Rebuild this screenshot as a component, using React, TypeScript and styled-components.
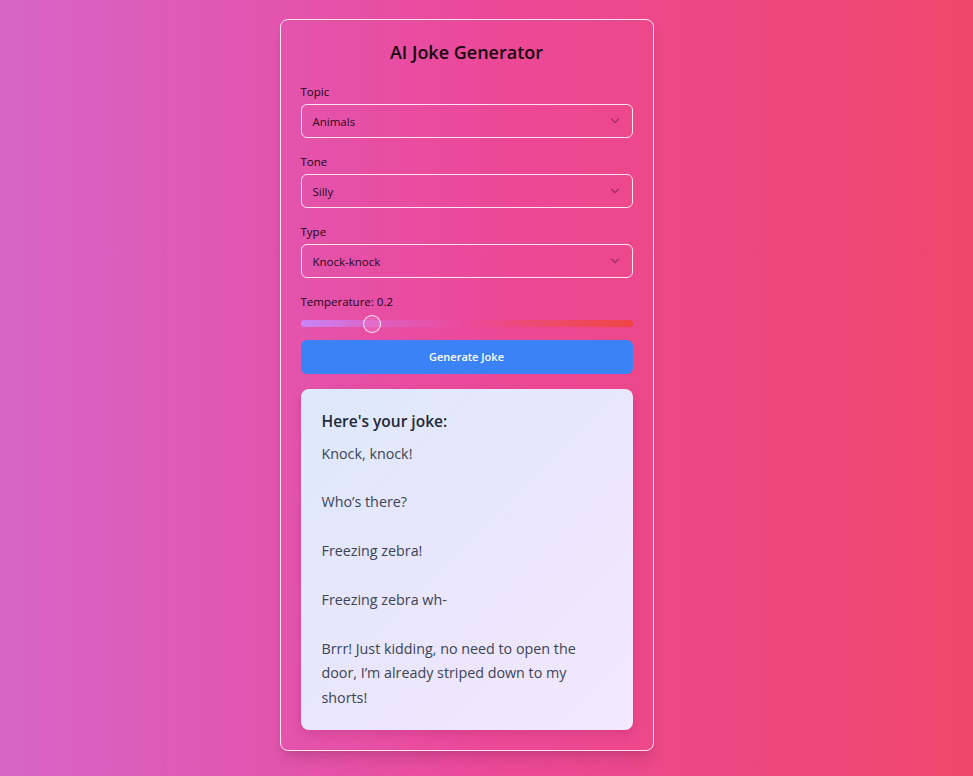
import * as React from "react";
import styled, { createGlobalStyle } from "styled-components";

const GlobalStyle = createGlobalStyle`
  html, body {
    margin: 0;
    padding: 0;
  }
  body {
    font-family: "Open Sans", "Noto Sans", sans-serif;
    background: linear-gradient(to right, #d665c8 0%, #ec4899 50%, #ef476b 100%);
    min-height: 776px;
  }
  * {
    box-sizing: border-box;
  }
`;

const Page = styled.div`
  display: flex;
  justify-content: center;
  padding: 19px 40px 0 0;
  min-height: 776px;
`;

const Card = styled.div`
  width: 374px;
  height: 732px;
  padding: 20px;
  border: 1px solid rgba(255, 255, 255, 0.85);
  border-radius: 8px;
  box-shadow: 0 10px 15px -3px rgba(0, 0, 0, 0.12), 0 4px 6px -4px rgba(0, 0, 0, 0.1);
  display: flex;
  flex-direction: column;
`;

const Title = styled.h1`
  margin: 0 0 20px;
  font-size: 18px;
  line-height: 24px;
  font-weight: 600;
  text-align: center;
  color: #14070f;
`;

const Field = styled.div`
  display: flex;
  flex-direction: column;
  margin-bottom: 16px;
`;

const Label = styled.label`
  font-size: 11.5px;
  line-height: 16px;
  font-weight: 500;
  color: #1c0612;
  margin-bottom: 4px;
`;

const SelectBox = styled.div`
  height: 34px;
  border: 1px solid rgba(255, 255, 255, 0.85);
  border-radius: 6px;
  display: flex;
  align-items: center;
  justify-content: space-between;
  padding: 0 12px 0 11px;
  font-size: 11.5px;
  color: #2a0b22;
`;

const Chevron = () => (
  <svg width="10" height="6" viewBox="0 0 10 6" fill="none">
    <path d="M1.5 1.2 L5 4.6 L8.5 1.2" stroke="#8a2a5c" strokeWidth="1.1" strokeLinecap="round" strokeLinejoin="round" />
  </svg>
);

const SliderWrap = styled.div`
  position: relative;
  height: 20px;
  display: flex;
  align-items: center;
  margin-bottom: 7px;
`;

const Track = styled.div`
  width: 100%;
  height: 7px;
  border-radius: 4px;
  background: linear-gradient(to right, #c885f5 0%, rgba(220, 100, 200, 0.7) 25%, rgba(236, 72, 153, 0.4) 50%, #ee4a6a 75%, #ef4444 100%);
`;

const Thumb = styled.div`
  position: absolute;
  top: 1px;
  width: 18px;
  height: 18px;
  border-radius: 50%;
  border: 1.5px solid rgba(255, 255, 255, 0.9);
  background: rgba(235, 130, 210, 0.35);
  transform: translateX(-50%);
`;

const GenerateButton = styled.button`
  height: 34px;
  width: 100%;
  border: none;
  border-radius: 6px;
  background: #3b82f6;
  color: #ffffff;
  font-family: inherit;
  font-size: 11px;
  font-weight: 600;
  margin-bottom: 15px;
`;

const JokeBox = styled.div`
  flex: 1;
  border-radius: 8px;
  padding: 20px 21px;
  background: linear-gradient(135deg, #dde9fd 0%, #e9e6fd 50%, #f3e8fe 100%);
  box-shadow: 0 4px 10px rgba(120, 20, 70, 0.18);
`;

const JokeHeading = styled.h2`
  margin: 0 0 9px;
  font-size: 15.5px;
  line-height: 24px;
  font-weight: 600;
  color: #1f2937;
`;

const JokeText = styled.p`
  margin: 0;
  font-size: 14.3px;
  line-height: 24.4px;
  color: #3b4456;
  white-space: pre-wrap;
`;

const topics = [
  { label: "Topic", value: "Animals" },
  { label: "Tone", value: "Silly" },
  { label: "Type", value: "Knock-knock" },
];

const joke =
  "Knock, knock!\n\nWho\u2019s there?\n\nFreezing zebra!\n\nFreezing zebra wh-\n\nBrrr! Just kidding, no need to open the door, I\u2019m already striped down to my shorts!";

const App = () => {
  const temperature = 0.2;
  return (
    <>
      <GlobalStyle />
      <Page>
        <Card>
          <Title>AI Joke Generator</Title>
          {topics.map((t) => (
            <Field key={t.label}>
              <Label>{t.label}</Label>
              <SelectBox>
                <span>{t.value}</span>
                <Chevron />
              </SelectBox>
            </Field>
          ))}
          <Label>Temperature: {temperature}</Label>
          <SliderWrap>
            <Track />
            <Thumb style={{ left: `${temperature * 100 + 1.5}%` }} />
          </SliderWrap>
          <GenerateButton>Generate Joke</GenerateButton>
          <JokeBox>
            <JokeHeading>Here's your joke:</JokeHeading>
            <JokeText>{joke}</JokeText>
          </JokeBox>
        </Card>
      </Page>
    </>
  );
};

export default App;
